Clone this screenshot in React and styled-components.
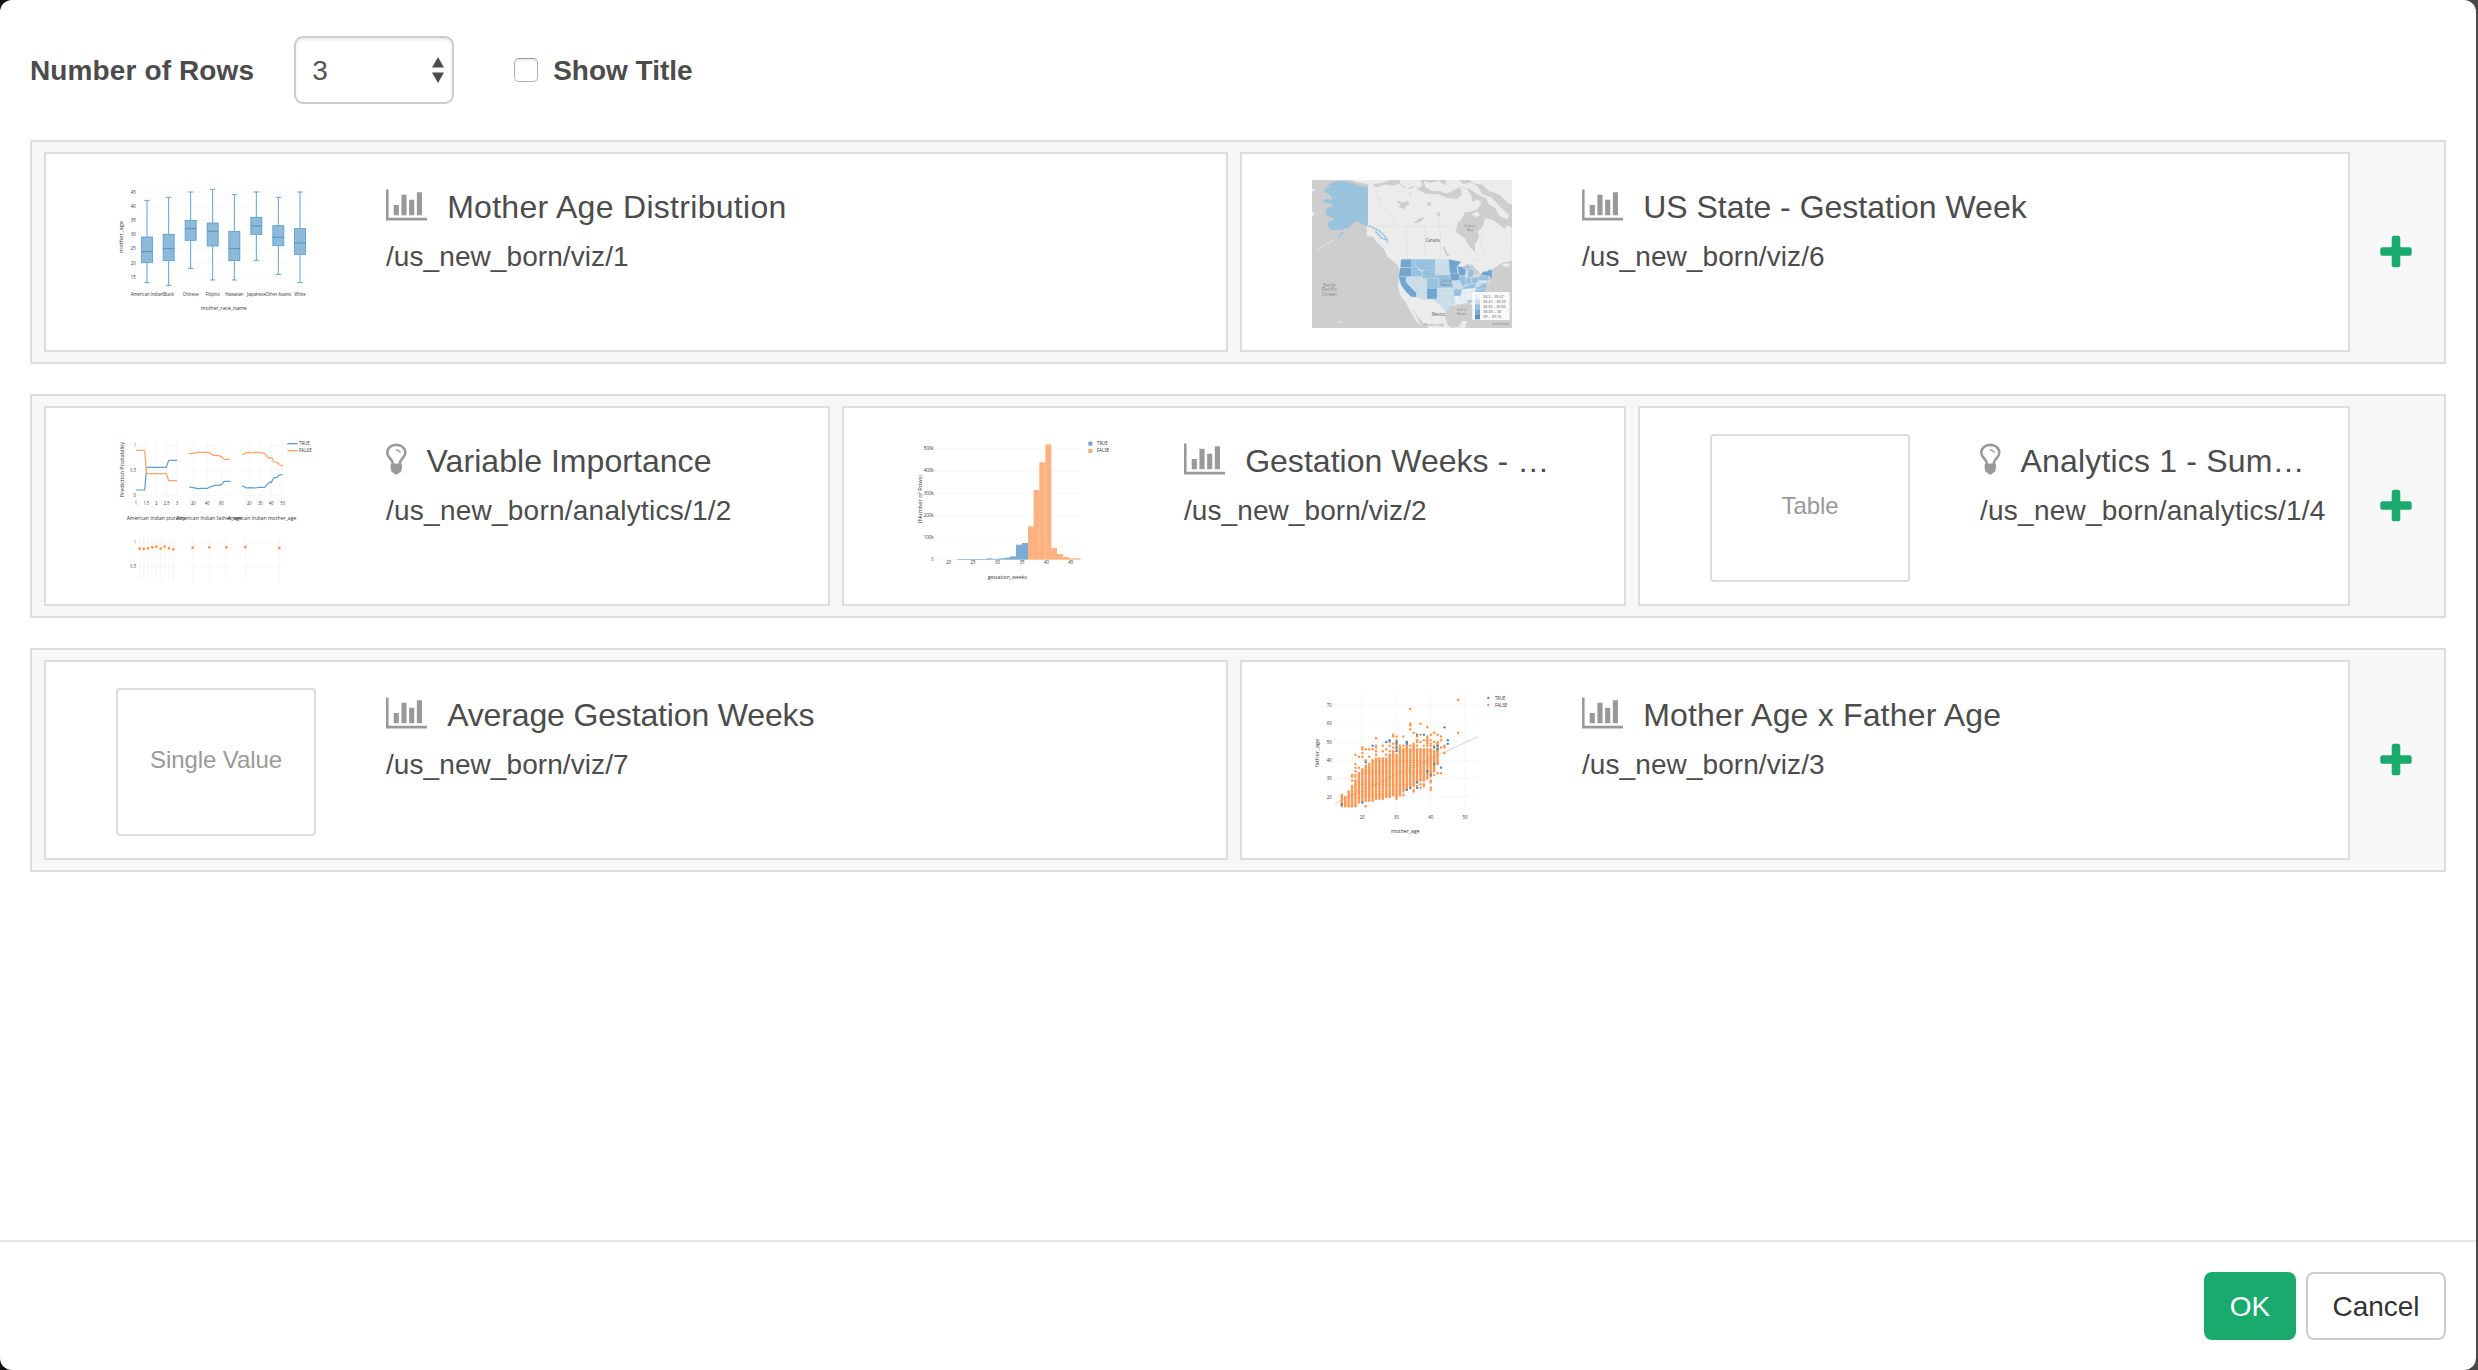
import React from "react";
import styled, { createGlobalStyle } from "styled-components";

const GlobalStyle = createGlobalStyle`
  * { box-sizing: border-box; }
  html, body { margin: 0; padding: 0; height: 100%; overflow: hidden; }
  body {
    background: linear-gradient(90deg, #111 0, #111 40px, #474747 400px);
    font-family: "Liberation Sans", Arial, Helvetica, sans-serif;
    color: #4c4c4c;
  }
`;

const Modal = styled.div`
  width: 2476px;
  height: 1370px;
  background: #fff;
  border-radius: 12px;
  display: flex;
  flex-direction: column;
`;

const Body = styled.main`
  flex: 1;
  padding: 36px 30px 0;
`;

const Toolbar = styled.div`
  display: flex;
  align-items: center;
  height: 68px;
  margin-bottom: 36px;
`;

const FieldLabel = styled.label`
  font-size: 28px;
  font-weight: 700;
  line-height: 40px;
  padding-top: 1px;
  white-space: nowrap;
  letter-spacing: ${(p) => p.$tracking || "0"};
`;

const SelectWrap = styled.div`
  display: grid;
  width: 160px;
  height: 68px;
  margin-left: ${(p) => p.$offset};
  align-items: center;

  > * { grid-area: 1 / 1; }
`;

const Select = styled.select`
  appearance: none;
  width: 160px;
  height: 68px;
  padding: 1px 0 0 16px;
  border: 2px solid #ccc;
  border-radius: 9px;
  background: #fff;
  box-shadow: inset 0 2px 3px rgba(0, 0, 0, 0.08);
  font: 28px "Liberation Sans", Arial, sans-serif;
  color: #555;
`;

const SelectArrows = styled.svg`
  justify-self: end;
  margin-right: 10px;
  pointer-events: none;
`;

const Checkbox = styled.input`
  appearance: none;
  width: 24px;
  height: 24px;
  margin: 0 15px 0 60px;
  border: 1.5px solid #b0b0b0;
  border-top-color: #999;
  border-radius: 5px;
  background: #fff;
  box-shadow: inset 0 2px 2px rgba(0, 0, 0, 0.08);
`;

const Rows = styled.div`
  display: flex;
  flex-direction: column;
  gap: 30px;
`;

const Row = styled.section`
  display: grid;
  grid-template-columns: ${(p) => p.$columns} 68px;
  column-gap: 12px;
  height: 224px;
  padding: 10px 0 10px 12px;
  border: 2px solid #dcdcdc;
  background: #f7f7f7;
`;

const Card = styled.article`
  display: flex;
  min-width: 0;
  height: 200px;
  padding: 26px 0 0 70px;
  border: 2px solid #dcdcdc;
  background: #fff;
`;

const Thumb = styled.svg`
  display: block;
  flex: none;
  width: 200px;
  height: 148px;
  font-family: "Open Sans", "DejaVu Sans", sans-serif;
  fill: #333;
`;

const Placeholder = styled.div`
  flex: none;
  display: flex;
  align-items: center;
  justify-content: center;
  width: 200px;
  height: 148px;
  border: 2px solid #dcdcdc;
  border-radius: 4px;
  color: #999;
  font-size: 24px;
  padding-bottom: 4px;
  letter-spacing: -0.1px;
`;

const Details = styled.div`
  margin-left: 70px;
  min-width: 0;
`;

const TitleLine = styled.h3`
  display: flex;
  align-items: flex-start;
  gap: 20px;
  height: 51px;
  margin: 0;
  font-size: 32px;
  font-weight: 400;
  line-height: 54px;
  white-space: nowrap;
`;

const Icon = styled.svg`
  flex: none;
  display: block;
  height: ${(p) => p.$size}px;
  width: ${(p) => p.$width}px;
  margin-top: ${(p) => p.$top || 0}px;
  fill: ${(p) => p.$color || "#999"};
`;

const Title = styled.span`
  letter-spacing: ${(p) => p.$tracking}px;
`;

const Path = styled.div`
  font-size: 28px;
  line-height: 51px;
  white-space: nowrap;
  letter-spacing: ${(p) => p.$tracking}px;
`;

const AddButton = styled.button`
  display: flex;
  align-items: center;
  justify-content: center;
  padding: 0;
  border: 0;
  background: none;
`;

const Footer = styled.footer`
  display: flex;
  justify-content: flex-end;
  gap: 10px;
  height: 130px;
  padding: 30px 30px 0 0;
  border-top: 2px solid #e5e5e5;
`;

const Button = styled.button`
  width: ${(p) => p.$width}px;
  height: 68px;
  padding: 1px 0 0;
  border: 2px solid ${(p) => (p.$primary ? "#1baa6e" : "#ccc")};
  border-radius: 8px;
  background: ${(p) => (p.$primary ? "#1baa6e" : "#fff")};
  color: ${(p) => (p.$primary ? "#fff" : "#333")};
  font: 28px "Liberation Sans", Arial, sans-serif;
`;

function ChartIcon() {
  return (
    <Icon $size={36} $width={41.14} $top={7} viewBox="0 0 2048 1792">
      <path d="M2048 1536v128H0V128h128v1408h1920zM640 896v512H384V896h256zm384-512v1024H768V384h256zm384 256v768h-256V640h256zm384-384v1152h-256V256h256z" />
    </Icon>
  );
}

function BulbIcon() {
  return (
    <Icon $size={36} $width={20.57} $top={7} viewBox="0 0 1024 1792">
      <path d="M736 576q0 13-9.500 22.500t-22.500 9.500-22.500-9.500-9.500-22.500q0-46-54-71t-106-25q-13 0-22.500-9.500t-9.500-22.500 9.500-22.500 22.500-9.500q50 0 99.500 16t87 54 37.500 90zm160 0q0-72-34.500-134t-90-101.500-123-62-136.500-22.500-136.500 22.500-123 62-90 101.500-34.500 134q0 101 68 180 10 11 30.500 33t30.500 33q128 153 141 298h228q13-145 141-298 10-11 30.500-33t30.500-33q68-79 68-180zm128 0q0 155-103 268-45 49-74.500 87t-59.500 95.500-34 107.500q47 28 47 82 0 37-25 64 25 27 25 64 0 52-45 81 13 23 13 47 0 46-31.500 71t-77.500 25q-20 44-60 70t-87 26-87-26-60-70q-46 0-77.500-25t-31.500-71q0-24 13-47-45-29-45-81 0-37 25-64-25-27-25-64 0-54 47-82-4-50-34-107.500t-59.500-95.500-74.500-87q-103-113-103-268 0-99 44.500-184.500t117-142 164-89 186.500-32.500 186.500 32.500 164 89 117 142 44.500 184.500z" />
    </Icon>
  );
}

function PlusIcon() {
  return (
    <Icon $size={40} $width={40} $top={2} $color="#1baa6e" viewBox="0 0 1792 1792">
      <path d="M1600 736v192q0 40-28 68t-68 28h-416v416q0 40-28 68t-68 28h-192q-40 0-68-28t-28-68v-416h-416q-40 0-68-28t-28-68v-192q0-40 28-68t68-28h416v-416q0-40 28-68t68-28h192q40 0 68 28t28 68v416h416q40 0 68 28t28 68z" />
    </Icon>
  );
}

function Label({ x, y, w, size = 14, anchor = "middle", rotate, children, ...rest }) {
  return (
    <text
      x={x}
      y={y}
      fontSize={size}
      textAnchor={anchor}
      textLength={w}
      lengthAdjust="spacingAndGlyphs"
      transform={rotate ? `rotate(-90 ${x} ${y})` : undefined}
      {...rest}
    >
      {children}
    </text>
  );
}

const BOXES = [
  { x: 141, top: 106, q3: 216, med: 260, q1: 293, low: 353, name: "American Indian", w: 98 },
  { x: 206, top: 97, q3: 208, med: 251, q1: 287, low: 361, name: "Black", w: 33 },
  { x: 272, top: 81, q3: 166, med: 191, q1: 226, low: 310, name: "Chinese", w: 48 },
  { x: 338, top: 73, q3: 174, med: 199, q1: 243, low: 345, name: "Filipino", w: 42 },
  { x: 403, top: 89, q3: 199, med: 251, q1: 287, low: 345, name: "Hawaiian", w: 55 },
  { x: 469, top: 81, q3: 157, med: 183, q1: 208, low: 286, name: "Japanese", w: 56 },
  { x: 535, top: 97, q3: 182, med: 217, q1: 242, low: 328, name: "Other Asians", w: 77 },
  { x: 600, top: 81, q3: 191, med: 234, q1: 268, low: 353, name: "White", w: 34 },
];

function BoxPlot() {
  return (
    <Thumb viewBox="48 45 600 444">
      {[45, 40, 35, 30, 25, 20, 15].map((v, i) => (
        <g key={v}>
          <line x1="110" x2="632" y1={81 + i * 42.6} y2={81 + i * 42.6} stroke="#f3f3f3" strokeWidth="2" />
          <Label x={107} y={85.5 + i * 42.6} w={15} anchor="end">{v}</Label>
        </g>
      ))}
      {BOXES.map((b) => (
        <g key={b.name}>
          <g stroke="#5fa3d0" strokeWidth="3" fill="none">
            <path d={`M${b.x} ${b.top}V${b.q3}M${b.x} ${b.q1}V${b.low}M${b.x - 8} ${b.top}h16M${b.x - 8} ${b.low}h16`} />
          </g>
          <rect x={b.x - 16.5} y={b.q3} width="33" height={b.q1 - b.q3} fill="#8fb9d9" stroke="#5b9fcd" strokeWidth="2.6" />
          <line x1={b.x - 17} x2={b.x + 17} y1={b.med} y2={b.med} stroke="#4a94c8" strokeWidth="3" />
          <Label x={b.x} y={392} w={b.w}>{b.name}</Label>
        </g>
      ))}
      <Label x={371} y={434} w={138} size={15}>mother_race_name</Label>
      <Label x={70} y={216} w={96} size={15} rotate>mother_age</Label>
    </Thumb>
  );
}

const DARK = "#71a5d0";
const MID = "#97c1de";
const LIGHT = "#cbdde8";
const PALE = "#eceff8";

const STATES = [
  [DARK, "303,268 335,268 335,293 301,292"],
  [DARK, "300,293 335,293 335,320 296,320"],
  [DARK, "296,320 318,320 318,336 350,369 349,382 333,380 318,366 303,345"],
  [MID, "335,268 342,268 346,285 356,300 368,305 368,320 335,320"],
  [MID, "342,268 406,268 406,300 360,300 346,285"],
  [LIGHT, "318,320 355,320 355,357 349,367 318,336"],
  [LIGHT, "355,320 368,320 368,325 381,325 381,355 355,355"],
  [MID, "368,300 406,300 406,325 368,325"],
  [MID, "381,325 416,325 416,355 381,355"],
  [LIGHT, "352,355 381,355 381,388 366,388 350,380"],
  [DARK, "381,355 412,355 412,387 381,387"],
  [LIGHT, "406,268 446,268 448,291 406,291"],
  [LIGHT, "406,291 448,291 449,315 406,315"],
  [MID, "406,315 449,315 456,333 416,333 416,325 406,325"],
  [MID, "416,333 458,333 460,353 416,353"],
  [LIGHT, "412,355 460,355 462,378 428,372 428,360 412,360"],
  [LIGHT, "412,360 428,360 428,372 462,378 466,400 445,412 440,423 426,412 412,398 395,387 412,387"],
  [DARK, "446,268 484,275 471,290 473,310 449,310"],
  [DARK, "449,310 477,310 481,328 475,332 454,332"],
  [LIGHT, "456,332 479,332 489,356 460,358"],
  [MID, "460,358 487,358 481,378 462,378"],
  [PALE, "462,378 480,378 482,391 495,402 466,402"],
  [DARK, "472,289 485,290 497,298 495,317 478,317"],
  [MID, "478,317 495,317 498,343 488,350 480,334"],
  [MID, "487,291 503,287 520,294 505,297"],
  [MID, "503,300 514,296 523,305 519,320 504,321"],
  [MID, "497,322 514,322 515,340 499,344"],
  [MID, "515,322 534,320 534,335 525,342 516,339"],
  [MID, "488,352 517,340 530,343 524,354 488,358"],
  [PALE, "488,358 530,356 524,364 484,370"],
  [PALE, "484,370 496,368 497,393 482,392"],
  [PALE, "496,367 511,366 514,390 497,394"],
  [MID, "501,391 528,390 536,405 540,425 530,418 520,396 503,398"],
  [PALE, "511,366 524,364 533,386 514,390"],
  [LIGHT, "526,345 538,333 548,338 538,350"],
  [MID, "526,352 538,350 550,337 560,346 560,357 528,358"],
  [MID, "526,359 558,357 556,366 544,374 524,365"],
  [MID, "535,319 564,317 568,330 535,332"],
  [DARK, "540,315 550,305 562,304 567,299 576,300 576,326 566,318"],
  [LIGHT, "566,331 572,326 569,342 563,338"],
];

const LEGEND = [
  [PALE, "38.3 – 38.47"],
  [LIGHT, "38.47 – 38.69"],
  [MID, "38.69 – 38.83"],
  ["#74aed2", "38.83 – 39"],
  ["#5b90c6", "39 – 39.16"],
];

function StateMap() {
  return (
    <Thumb viewBox="36 30 600 444">
      <rect x="36" y="30" width="600" height="444" fill="#cecece" />
      <g fill="#ececec">
        <path d="M204 50l8-6 20 8 24-9 22 4 20-6 12 12 20 4 15-8 10 10 22 12 38 2 26 10 30 4 16-14-8-20 20 4 14 18 4 20 16-8 12 12-12 18-22 8-16 2-10 20-12 12-6 24 8 10 20 12 14 26 16 14 0-22 12-20-4-18 16-16 6-24 26 6 18 14 16 12 6-12 14 8V272l-30 8-22 14-14 8 4 14-10 10-12 20-8 14-6 10-14 16 10 22 2 20-14-10-10-20-28 4-32 6-14 10-2 22 8 24 12 10 22-4 10-18 14 2-8 26 10 6-4 12-20 0-10 16H430l-30-18-16-24-30-30-18-30 14 30 12 24-14-12-20-36-10-20-16-20-8-30 4-40-2-20-34-28-10-24-20-16-10-18-22-4z" />
        <path d="M150 30h118l-20 8-24 4-14 10-8-10-20-4z" />
        <path d="M300 30h60l8 16-12 8-18-6-16 8-20-12z" />
        <path d="M372 34l20 4 24-6 14 10 22 8 4 16-20 4-18-8-20 2-22-12z" />
        <path d="M438 30h40l10 12 24-4 20 10 14 24 28 10 30 32 24 22-6 12-24-10-12-24-18-10-10-20-28-12-22-16-30-4-20 10-18-8z" />
        <path d="M510 30h126v74l-12-4-28-28-30-10-18-18-30-4z" />
        <path d="M36 124l8 6-8 12zM36 55l12 6-12 4z" />
        <path d="M515 134l16-10 10 10-12 8zM500 100l14-6 10 14-14 6z" />
        <path d="M604 284l16-4 12 4-12 8zM110 452l8 2 10 6-8-2z" />
      </g>
      <g fill="#cecece">
        <path d="M292 92l20 6 8-6 10 6-8 8-10 12-16-6 6-8-10-6zM340 158l20-14 16-2-12 10-18 8zM380 100l12-6 2 12-10 2zM428 232l6-4 4 14 10 14-6 4-10-16zM326 70l8 0-2 6zM240 82l6 8-4 2zM410 130l8-4 4 10-8 4z" />
        <path d="M486 292l16-10 18 4 8 12-10 4-8-8-10 14 2 12-6-6zM520 298l14 2 6 12-16 8-2-12zM534 318l14-8 8 2-10 6z" />
      </g>
      <g fill="none" stroke="#d9d9d9" strokeWidth="1.5">
        <path d="M204 168H462M318 168l4 100M374 168v100M418 150l4 50-2 68M226 60l16 44 28 30 18 34M500 246l20 20 26 10M546 176l-4 50 10 30" />
      </g>
      <path fill="#9ac3de" d="M82 46l14-10 24-4 20 4 22 4 18 8 24 4V168l-18-6-14-10-12 8-14 14-24 6-10 0-20 0-10-14 6-12 16-4-12-10-14-4-2-14 10-10 12-2-6-10-16 0-8-10 12-4 14 4 2-10-12-8-12-10 6-10 18 2z" />
      <path stroke="#9ac3de" strokeWidth="5" strokeDasharray="9 2" fill="none" d="M206 168l16 6 14 8 12 10 12 14 4 12M130 186l-16 20M226 184l18 20 14 6" />
      <path stroke="#d9e6ee" strokeWidth="3" fill="none" d="M104 208l-26 16-26 14" />
      <g stroke="#c4dbea" strokeWidth="1" strokeLinejoin="round">
        {STATES.map(([fill, points]) => (
          <polygon key={points} fill={fill} points={points} />
        ))}
      </g>
      <g fill="#888">
        <Label x={398} y={217} w={42} fill="#555">Canada</Label>
        <Label x={88} y={350} w={38}>North</Label>
        <Label x={88} y={364} w={46}>Pacific</Label>
        <Label x={88} y={378} w={44}>Ocean</Label>
        <Label x={509} y={170} w={34} size={11}>Hudson</Label>
        <Label x={510} y={182} w={18} size={11}>Bay</Label>
        <Label x={437} y={335} w={32} size={11} fill="#5c7f98">United</Label>
        <Label x={439} y={347} w={36} size={11} fill="#5c7f98">States</Label>
        <Label x={485} y={422} w={30} size={11}>Gulf of</Label>
        <Label x={485} y={434} w={30} size={11}>Mexico</Label>
        <Label x={415} y={438} w={40} fill="#555">Mexico</Label>
        <Label x={402} y={469} w={58} size={12}>Mexico City</Label>
        <Label x={602} y={466} w={52} size={10}>Santo Domingo</Label>
      </g>
      <rect x="517" y="366" width="112" height="84" rx="4" fill="#fff" fillOpacity="0.88" />
      {LEGEND.map(([fill, text], i) => (
        <g key={text}>
          <rect x="525" y={373 + i * 15} width="15" height="15" fill={fill} />
          <Label x={549} y={384.5 + i * 15} w={i === 0 ? 62 : i > 2 ? 55 : 68} size={12} anchor="start" fill="#666">{text}</Label>
        </g>
      ))}
    </Thumb>
  );
}

const ORANGE = "#ffa266";
const BLUE = "#5c9fce";

function DependencePlot() {
  return (
    <Thumb viewBox="48 27 600 444">
      <g stroke="#f2f2f2" strokeWidth="2">
        {[61, 136, 211, 351, 425].map((y) => (
          <path key={y} d={`M108 ${y}H231M267 ${y}H390M426 ${y}H549`} />
        ))}
        {[139, 169, 200, 231, 280, 322, 364, 448, 481, 514, 548].map((x) => (
          <line key={x} x1={x} x2={x} y1="42" y2="220" />
        ))}
        {[119, 131, 144, 156, 169, 182, 194, 207, 220, 278, 328, 379, 436, 538].map((x) => (
          <line key={x} x1={x} x2={x} y1="332" y2="470" />
        ))}
      </g>
      <g fill="none" strokeWidth="3.6" strokeLinejoin="round">
        <g stroke={BLUE}>
          <path d="M108 195H134L140 127H199L206 106H231" />
          <path d="M267 186l14 2 12 3 16-1 14 0 12-6 12-4 10 1 8-3 8-9h18" />
          <path d="M426 182l14 7 12-1 12 1 14-2 16 0 8-9 6-6 6 0 8-14 8 0 8-8 10-1" />
        </g>
        <g stroke={ORANGE}>
          <path d="M108 76H134L140 146H199L206 167H231" />
          <path d="M267 86l14-1 12-3 34 0 12 9 14 0 12 4 8 8h17" />
          <path d="M426 90l12-7 10-1 8 2 8-2 16 1 14 2 8 10 6 5 8-2 6 13 8 0 10 9 9 2" />
        </g>
      </g>
      <g fill="#ff9650">
        {[[119, 371], [131, 372], [144, 370], [157, 367], [169, 365], [182, 371], [194, 365], [207, 370], [220, 373], [278, 368], [328, 367], [379, 367], [436, 366], [538, 369]].map(([x, y]) => (
          <circle key={x} cx={x} cy={y} r="4.2" />
        ))}
      </g>
      <Label x={108} y={66} w={5} anchor="end">1</Label>
      <Label x={108} y={140} w={17} anchor="end">0.5</Label>
      <Label x={108} y={216} w={7} anchor="end">0</Label>
      <Label x={108} y={356} w={5} anchor="end">1</Label>
      <Label x={108} y={430} w={17} anchor="end">0.5</Label>
      {[[108, "1"], [139, "1.5"], [169, "2"], [200, "2.5"], [231, "3"], [280, "20"], [322, "40"], [364, "60"], [448, "20"], [481, "30"], [514, "40"], [548, "50"]].map(([x, t]) => (
        <Label key={x} x={x} y={240} w={t.length === 1 ? 7 : t.length === 2 ? 14 : 17}>{t}</Label>
      ))}
      <Label x={168} y={285} w={176} size={15}>American Indian plurality</Label>
      <Label x={327} y={285} w={198} size={15}>American Indian father_age</Label>
      <Label x={486} y={285} w={206} size={15}>American Indian mother_age</Label>
      <Label x={71} y={134} w={166} size={15} rotate>Prediction Probability</Label>
      <line x1="562" x2="593" y1="56" y2="56" stroke={BLUE} strokeWidth="4" />
      <line x1="562" x2="593" y1="77" y2="77" stroke={ORANGE} strokeWidth="4" />
      <Label x={597} y={61} w={32} anchor="start">TRUE</Label>
      <Label x={597} y={82} w={38} anchor="start">FALSE</Label>
    </Thumb>
  );
}

const BARS = [
  [260, 18, 400], [278, 17.6, 402], [295, 18, 400], [313, 17.6, 398], [330, 18, 394], [348, 18, 359], [366, 18, 354],
];
const LATE_BARS = [
  [384, 18, 304], [401, 18, 195], [418, 18, 112], [436, 18, 58], [453, 18, 369], [471, 18, 387], [489, 18, 396], [506, 36, 400],
];

function Histogram() {
  return (
    <Thumb viewBox="42 27 600 444">
      {["500k", "400k", "300k", "200k", "100k", "0"].map((t, i) => (
        <g key={t}>
          <line x1="105" x2="542" y1={72 + i * 66.4} y2={72 + i * 66.4} stroke="#f0f0f0" strokeWidth="2" />
          <Label x={101} y={76 + i * 66.4} w={t === "0" ? 7 : 30} anchor="end">{t}</Label>
        </g>
      ))}
      <rect x="172" y="402.5" width="90" height="2" fill="#7fadd2" />
      <g fill="#7badd2">
        {BARS.map(([x, w, y]) => <rect key={x} x={x} y={y} width={w} height={404 - y} />)}
      </g>
      <g fill="#ffb27f">
        {LATE_BARS.map(([x, w, y]) => <rect key={x} x={x} y={y} width={w} height={404 - y} />)}
      </g>
      {[20, 25, 30, 35, 40, 45].map((v, i) => (
        <Label key={v} x={146 + i * 73.3} y={418} w={15}>{v}</Label>
      ))}
      <Label x={322} y={461} w={118} size={15}>gestation_weeks</Label>
      <Label x={65} y={222} w={144} size={15} rotate>(Number of Rows)</Label>
      <rect x="565" y="50" width="12" height="12" fill="#6ea5cf" />
      <rect x="565" y="72" width="12" height="12" fill="#ffab73" />
      <Label x={591} y={61} w={32} anchor="start">TRUE</Label>
      <Label x={591} y={82} w={37} anchor="start">FALSE</Label>
    </Thumb>
  );
}

const COLUMNS = [
  [14, 15, 21], [15, 15, 20], [16, 15, 23], [17, 15, 26], [18, 15, 29], [19, 17, 33], [20, 18, 35], [21, 18, 37],
  [22, 18, 38], [23, 18, 40], [24, 19, 41], [25, 20, 41], [26, 19, 41], [27, 20, 41], [28, 20, 43], [29, 21, 45], [30, 21, 43],
  [31, 22, 46], [32, 23, 46], [33, 24, 48], [34, 25, 46], [35, 26, 49], [36, 28, 46], [37, 29, 46], [38, 30, 46], [39, 30, 46],
  [40, 33, 46], [41, 34, 45], [42, 38, 47],
];
const EXTRAS = [
  [17, 29], [17, 31], [17, 32], [18, 31], [18, 32], [18, 34], [18, 36], [18, 38], [18, 43], [19, 36], [19, 42], [20, 42], [20, 44],
  [20, 46], [20, 47], [21, 15], [21, 46], [21, 40], [22, 42], [22, 46], [23, 46], [24, 43], [24, 45], [24, 47], [24, 48], [24, 52],
  [25, 19], [26, 45], [26, 48], [27, 46], [27, 43], [28, 45], [28, 48], [28, 50], [29, 47], [29, 49], [29, 53], [29, 54], [30, 19],
  [30, 20], [30, 46], [30, 48], [30, 51], [30, 53], [31, 21], [31, 47], [31, 48], [32, 21], [32, 48], [32, 53], [33, 50], [33, 46],
  [34, 68], [34, 60], [34, 59], [34, 57], [34, 48], [35, 55], [35, 23], [35, 24], [36, 26], [36, 48], [36, 50], [36, 51], [36, 53],
  [37, 60], [37, 25], [37, 27], [37, 50], [37, 54], [38, 26], [38, 27], [38, 29], [38, 48], [38, 51], [39, 48], [39, 49], [39, 50],
  [39, 51], [39, 52], [39, 53], [39, 58], [40, 24], [40, 25], [40, 28], [40, 29], [40, 31], [40, 48], [40, 49], [40, 51], [40, 54],
  [41, 32], [41, 48], [41, 50], [41, 55], [42, 33], [42, 48], [42, 49], [42, 50], [42, 54], [43, 33], [43, 47], [43, 51], [43, 53],
  [44, 44], [44, 47], [44, 48], [48, 55], [48, 73],
];
const BLUES = [
  [14, 16], [20, 17], [21, 39], [23, 48], [27, 50], [28, 51], [30, 49], [30, 50], [30, 45], [30, 47], [33, 49], [33, 50], [33, 24],
  [34, 25], [36, 54], [36, 25], [36, 28], [38, 54], [39, 34], [40, 32], [41, 38], [41, 47], [42, 46], [42, 48], [43, 36], [44, 58],
  [45, 49], [45, 51],
];
const px = (age) => 187 + (age - 20) * 10.26;
const py = (age) => 351 - (age - 20) * 5.5;

const COLUMN_DOTS = COLUMNS.flatMap(([age, low, high]) =>
  Array.from({ length: high - low + 1 }, (_, i) => [age, low + i])
);

function ScatterPlot() {
  return (
    <Thumb viewBox="36 24 600 444">
      <g stroke="#f2f2f2" strokeWidth="2">
        {[20, 30, 40, 50, 60, 70].map((v) => <line key={v} x1="105" x2="536" y1={py(v)} y2={py(v)} />)}
        {[20, 30, 40, 50].map((v) => <line key={v} y1="38" y2="388" x1={px(v)} x2={px(v)} />)}
      </g>
      <g fill="#ff954f">
        {COLUMN_DOTS.map(([a, b]) => <circle key={`${a}-${b}`} cx={px(a)} cy={py(b)} r="3.9" />)}
        {EXTRAS.map(([a, b]) => <circle key={`e${a}-${b}`} cx={px(a)} cy={py(b)} r="3.7" />)}
      </g>
      <g fill="#4089c0">
        {BLUES.map(([a, b]) => <circle key={`${a}-${b}`} cx={px(a)} cy={py(b)} r="3.6" />)}
      </g>
      <line x1="105" y1="370" x2="536" y2="169" stroke="#b98c6c" strokeOpacity="0.6" strokeWidth="2" />
      {[20, 30, 40, 50, 60, 70].map((v) => <Label key={v} x={95} y={py(v) + 5} w={15} anchor="end">{v}</Label>)}
      {[20, 30, 40, 50].map((v) => <Label key={v} x={px(v)} y={416} w={15}>{v}</Label>)}
      <Label x={316} y={458} w={86} size={15}>mother_age</Label>
      <Label x={58} y={219} w={86} size={15} rotate>father_age</Label>
      <circle cx="565" cy="54" r="3.5" fill="#4089c0" />
      <circle cx="565" cy="75" r="3.5" fill="#ff8f45" />
      <Label x={585} y={59} w={31} anchor="start">TRUE</Label>
      <Label x={585} y={80} w={37} anchor="start">FALSE</Label>
    </Thumb>
  );
}

const ROWS = [
  {
    columns: "1184px 1110px",
    cards: [
      { Icon: ChartIcon, title: "Mother Age Distribution", tracking: 0.3, path: "/us_new_born/viz/1", preview: <BoxPlot /> },
      { Icon: ChartIcon, title: "US State - Gestation Week", tracking: 0, path: "/us_new_born/viz/6", preview: <StateMap /> },
    ],
  },
  {
    columns: "786px 784px 712px",
    cards: [
      { Icon: BulbIcon, title: "Variable Importance", tracking: 0.05, path: "/us_new_born/analytics/1/2", pathTracking: 0.24, preview: <DependencePlot /> },
      { Icon: ChartIcon, title: "Gestation Weeks - …", tracking: 0.03, path: "/us_new_born/viz/2", preview: <Histogram /> },
      { Icon: BulbIcon, title: "Analytics 1 - Sum…", tracking: 0.18, path: "/us_new_born/analytics/1/4", pathTracking: 0.24, preview: <Placeholder>Table</Placeholder> },
    ],
  },
  {
    columns: "1184px 1110px",
    cards: [
      { Icon: ChartIcon, title: "Average Gestation Weeks", tracking: -0.15, path: "/us_new_born/viz/7", preview: <Placeholder>Single Value</Placeholder> },
      { Icon: ChartIcon, title: "Mother Age x Father Age", tracking: 0.18, path: "/us_new_born/viz/3", preview: <ScatterPlot /> },
    ],
  },
];

export default function App() {
  return (
    <>
      <GlobalStyle />
      <Modal>
        <Body>
          <Toolbar>
            <FieldLabel htmlFor="rows" $tracking="0.12px">Number of Rows</FieldLabel>
            <SelectWrap $offset="40px">
              <Select id="rows" defaultValue="3">
                <option value="3">3</option>
              </Select>
              <SelectArrows width="12" height="26" viewBox="0 0 12 26" fill="#4c4c4c">
                <path d="M6 0l6 10.5H0zM6 26L0 15.5h12z" />
              </SelectArrows>
            </SelectWrap>
            <Checkbox id="title" type="checkbox" />
            <FieldLabel htmlFor="title">Show Title</FieldLabel>
          </Toolbar>
          <Rows>
            {ROWS.map((row, i) => (
              <Row key={i} $columns={row.columns}>
                {row.cards.map((card) => (
                  <Card key={card.path}>
                    {card.preview}
                    <Details>
                      <TitleLine>
                        <card.Icon />
                        <Title $tracking={card.tracking}>{card.title}</Title>
                      </TitleLine>
                      <Path $tracking={card.pathTracking || 0.08}>{card.path}</Path>
                    </Details>
                  </Card>
                ))}
                <AddButton aria-label="Add">
                  <PlusIcon />
                </AddButton>
              </Row>
            ))}
          </Rows>
        </Body>
        <Footer>
          <Button $primary $width={92}>OK</Button>
          <Button $width={140}>Cancel</Button>
        </Footer>
      </Modal>
    </>
  );
}
